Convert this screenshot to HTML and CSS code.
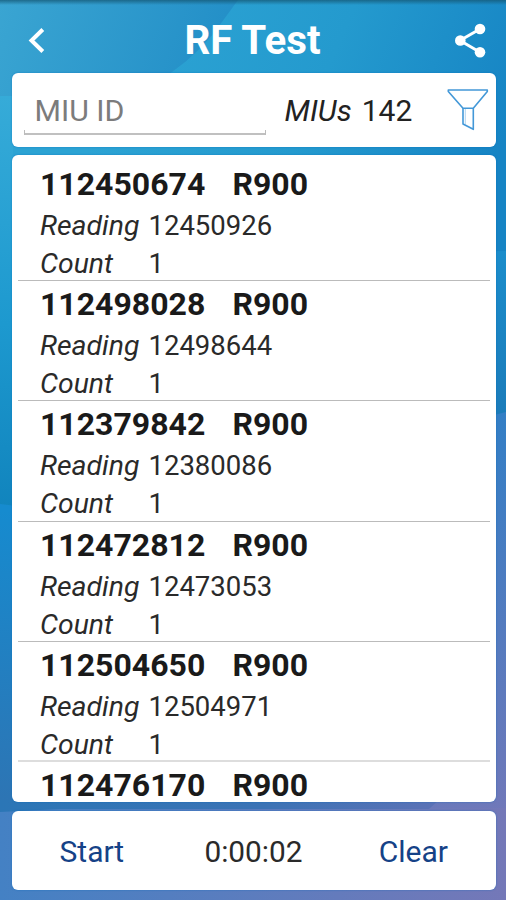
FILE: index.html
```html
<!DOCTYPE html>
<html lang="en">
<head>
    <meta charset="UTF-8">
    <title>RF Test</title>
    <link rel="stylesheet" href="styles.css">
</head>
<body>

<svg class="backdrop" viewBox="0 0 506 900" preserveAspectRatio="none" aria-hidden="true">
    <defs>
        <linearGradient id="sky" gradientUnits="userSpaceOnUse" x1="150" y1="0" x2="500" y2="150">
            <stop offset="0" stop-color="#2ca3d3"/>
            <stop offset="0.5" stop-color="#249ace"/>
            <stop offset="1" stop-color="#1684c4"/>
        </linearGradient>
        <linearGradient id="corner" gradientUnits="userSpaceOnUse" x1="0" y1="0" x2="200" y2="80">
            <stop offset="0" stop-color="#3aa5d2"/>
            <stop offset="1" stop-color="#2490c8"/>
        </linearGradient>
        <linearGradient id="side" x1="0" y1="0" x2="0" y2="1">
            <stop offset="0" stop-color="#36abd8"/>
            <stop offset="0.55" stop-color="#1d99cf"/>
            <stop offset="1" stop-color="#1184bd"/>
        </linearGradient>
        <linearGradient id="rightTop" x1="0" y1="0" x2="0" y2="1">
            <stop offset="0" stop-color="#1b8dcb"/>
            <stop offset="1" stop-color="#1b76b4"/>
        </linearGradient>
        <linearGradient id="low" gradientUnits="userSpaceOnUse" x1="0" y1="510" x2="0" y2="810">
            <stop offset="0" stop-color="#168bcf"/>
            <stop offset="1" stop-color="#2e74b3"/>
        </linearGradient>
        <linearGradient id="dusk" gradientUnits="userSpaceOnUse" x1="300" y1="420" x2="506" y2="820">
            <stop offset="0" stop-color="#2480c8"/>
            <stop offset="1" stop-color="#7278b9"/>
        </linearGradient>
        <linearGradient id="band" gradientUnits="userSpaceOnUse" x1="0" y1="0" x2="439" y2="0">
            <stop offset="0" stop-color="#2b76b6"/>
            <stop offset="0.6" stop-color="#3c73b5"/>
            <stop offset="1" stop-color="#5c72b6"/>
        </linearGradient>
        <linearGradient id="floor" x1="0" y1="0" x2="1" y2="0">
            <stop offset="0" stop-color="#4481c4"/>
            <stop offset="1" stop-color="#7478b8"/>
        </linearGradient>
        <linearGradient id="shade" x1="0" y1="0" x2="0" y2="1">
            <stop offset="0" stop-color="#155875" stop-opacity="0.75"/>
            <stop offset="1" stop-color="#155875" stop-opacity="0"/>
        </linearGradient>
    </defs>
    <rect width="506" height="900" fill="url(#sky)"/>
    <path d="M0 96H13V510H0Z" fill="url(#side)"/>
    <path d="M0 0H238L222 22Q202 51 172 72L130 96H0Z" fill="url(#corner)"/>
    <path d="M300 255L506 251V415L300 470Z" fill="url(#rightTop)"/>
    <path d="M0 504L300 540V830H0Z" fill="url(#low)"/>
    <path d="M506 412V900H240V480Z" fill="url(#dusk)"/>
    <path d="M0 808H506V900H0Z" fill="url(#floor)"/>
    <path d="M0 800H439L429 809H60L0 812Z" fill="url(#band)"/>
    <rect width="506" height="5" fill="url(#shade)"/>
</svg>

<div class="screen">
    <header class="topbar">
        <svg class="back" viewBox="0 0 24 30" fill="none" stroke="#fff" stroke-width="4">
            <path d="M18.8 3.5L7.5 14.5L18.8 25.5"/>
        </svg>
        <h1>RF Test</h1>
        <svg class="share" viewBox="0 0 34 36" fill="#fff">
            <path d="M25 6L5 17.5L25 29.2" fill="none" stroke="#fff" stroke-width="3"/>
            <circle cx="25" cy="6" r="5.3"/>
            <circle cx="5.3" cy="17.5" r="5.3"/>
            <circle cx="25" cy="29.2" r="5.3"/>
        </svg>
    </header>

    <section class="card search">
        <div class="field">MIU ID</div>
        <div class="total"><i>MIUs</i>142</div>
        <svg class="filter" viewBox="0 0 42 44" fill="none" stroke="#4398d8" stroke-width="1.6" stroke-linejoin="round">
            <path d="M1.3 3H40.3V4.5L26.3 21.3H16L1.3 4.5Z"/>
            <path d="M16 21.3V37L26.3 42.3V21.3"/>
            <path d="M18.3 22V37.5" stroke-width="0.7" opacity="0.6"/>
        </svg>
    </section>

    <section class="card list">
        <div class="item">
            <h2><span>112450674</span>R900</h2>
            <p><i>Reading</i>12450926</p>
            <p><i>Count</i>1</p>
        </div>
        <div class="item">
            <h2><span>112498028</span>R900</h2>
            <p><i>Reading</i>12498644</p>
            <p><i>Count</i>1</p>
        </div>
        <div class="item">
            <h2><span>112379842</span>R900</h2>
            <p><i>Reading</i>12380086</p>
            <p><i>Count</i>1</p>
        </div>
        <div class="item">
            <h2><span>112472812</span>R900</h2>
            <p><i>Reading</i>12473053</p>
            <p><i>Count</i>1</p>
        </div>
        <div class="item faded">
            <h2><span>112504650</span>R900</h2>
            <p><i>Reading</i>12504971</p>
            <p><i>Count</i>1</p>
        </div>
        <div class="item last">
            <h2><span>112476170</span>R900</h2>
        </div>
    </section>

    <footer class="card controls">
        <a class="start">Start</a>
        <span class="timer">0:00:02</span>
        <a class="clear">Clear</a>
    </footer>
</div>

</body>
</html>
```
FILE: styles.css
```css
* {
    box-sizing: border-box;
}
body {
    margin: 0;
    height: 900px;
    overflow: hidden;
    font-family: Roboto, sans-serif;
    color: #1a1a1a;
}
.backdrop {
    position: absolute;
    top: 0;
    left: 0;
    width: 506px;
    height: 900px;
    z-index: -1;
}
.screen {
    width: 506px;
    height: 900px;
    padding: 0 10px 10.5px 11.5px;
    display: flex;
    flex-direction: column;
}
.topbar {
    height: 73px;
    padding: 8px 7px 0 12.5px;
    display: flex;
    align-items: center;
    justify-content: space-between;
}
.back {
    width: 24px;
    height: 30px;
}
h1 {
    margin: 0;
    padding-left: 2px;
    font-size: 40.3px;
    line-height: 48px;
    font-weight: bold;
    color: #fff;
}
.share {
    width: 34px;
    height: 36px;
}
.card {
    background: #fff;
    border-radius: 6px;
    box-shadow: 0 0 2px rgba(0, 105, 185, 0.6);
}
.search {
    height: 74px;
    margin-bottom: 8px;
    padding-left: 12px;
    display: flex;
}
.field {
    width: 242px;
    height: 62px;
    padding: 21px 0 0 11px;
    font-size: 30.3px;
    line-height: 34px;
    color: #7c7c7c;
    background:
        linear-gradient(#bbb, #bbb) left bottom / 1px 5px no-repeat,
        linear-gradient(#bbb, #bbb) right bottom / 1px 5px no-repeat,
        linear-gradient(#c0c0c0, #c0c0c0) left bottom / 100% 2px no-repeat;
}
.total {
    width: 162px;
    padding: 21px 0 0 19px;
    font-size: 30px;
    line-height: 34px;
    color: #222;
    white-space: nowrap;
}
.total i {
    margin-right: 10px;
}
.filter {
    width: 42px;
    height: 44px;
    margin-top: 14px;
    margin-left: 19px;
}
.list {
    height: 647px;
    margin-bottom: 8.5px;
    padding: 5.7px 6px 0;
    overflow: hidden;
}
.item {
    height: 120.3px;
    padding-left: 22.5px;
    border-bottom: 1px solid #bbb;
}
.item.faded {
    border-bottom: 2px solid #ddd;
}
.item.last {
    height: auto;
    border: none;
}
.item h2 {
    margin: 0;
    font-size: 32px;
    line-height: 46px;
    font-weight: bold;
    display: flex;
}
.item.last h2 {
    padding-top: 7px;
    line-height: 32px;
}
.item h2 span {
    width: 192.5px;
}
.item p {
    margin: 0;
    height: 38px;
    font-size: 27.5px;
    line-height: 37px;
    color: #2a2a2a;
    display: flex;
}
.item i {
    width: 108.5px;
    font-size: 28.4px;
}
.controls {
    height: 79px;
    display: flex;
    align-items: center;
    padding: 3px 48px 0;
    font-size: 30px;
    justify-content: space-between;
}
.timer {
    padding-left: 4px;
    font-size: 29.8px;
    color: #2a2a2a;
}
.start, .clear {
    color: #154287;
}
```
